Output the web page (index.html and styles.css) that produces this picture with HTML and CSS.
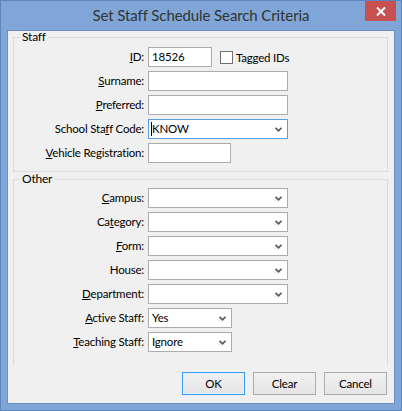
FILE: index.html
```html
<!DOCTYPE html>
<html>
<head>
<meta charset="utf-8">
<link rel="stylesheet" href="styles.css">
</head>
<body>
<div class="window">
  <div class="titlebar">
    <div class="tb-spacer"></div>
    <div class="title">Set Staff Schedule Search Criteria</div>
    <div class="tb-right">
      <div class="close-btn">
        <svg width="10" height="9" viewBox="0 0 10 9"><path d="M1 0.5 L9 8.5 M9 0.5 L1 8.5" stroke="#fff" stroke-width="2" fill="none"/></svg>
      </div>
    </div>
  </div>
  <div class="client">
    <fieldset class="group group-staff">
      <legend>Staff</legend>
      <div class="form-grid">
        <label class="lbl"><u>I</u>D:</label>
        <div class="field-row">
          <div class="textbox w-id">18526</div>
          <span class="checkbox"></span>
          <span class="check-label">Tagged IDs</span>
        </div>
        <label class="lbl"><u>S</u>urname:</label>
        <div class="textbox w-wide"></div>
        <label class="lbl"><u>P</u>referred:</label>
        <div class="textbox w-wide"></div>
        <label class="lbl">School Sta<u>f</u>f Code:</label>
        <div class="combo w-wide focused"><span class="combo-text"><span class="caret"></span>KNOW</span><svg class="chev" width="7" height="5" viewBox="0 0 7 5"><path d="M0.5 0.8 L3.5 3.8 L6.5 0.8" stroke="#5a5a5a" stroke-width="1.8" fill="none"/></svg></div>
        <label class="lbl"><u>V</u>ehicle Registration:</label>
        <div class="textbox w-veh"></div>
      </div>
    </fieldset>
    <fieldset class="group group-other">
      <legend>Other</legend>
      <div class="form-grid">
        <label class="lbl"><u>C</u>ampus:</label>
        <div class="combo w-wide"><span class="combo-text"></span><svg class="chev" width="7" height="5" viewBox="0 0 7 5"><path d="M0.5 0.8 L3.5 3.8 L6.5 0.8" stroke="#5a5a5a" stroke-width="1.8" fill="none"/></svg></div>
        <label class="lbl">Ca<u>t</u>egory:</label>
        <div class="combo w-wide"><span class="combo-text"></span><svg class="chev" width="7" height="5" viewBox="0 0 7 5"><path d="M0.5 0.8 L3.5 3.8 L6.5 0.8" stroke="#5a5a5a" stroke-width="1.8" fill="none"/></svg></div>
        <label class="lbl"><u>F</u>orm:</label>
        <div class="combo w-wide"><span class="combo-text"></span><svg class="chev" width="7" height="5" viewBox="0 0 7 5"><path d="M0.5 0.8 L3.5 3.8 L6.5 0.8" stroke="#5a5a5a" stroke-width="1.8" fill="none"/></svg></div>
        <label class="lbl">House:</label>
        <div class="combo w-wide"><span class="combo-text"></span><svg class="chev" width="7" height="5" viewBox="0 0 7 5"><path d="M0.5 0.8 L3.5 3.8 L6.5 0.8" stroke="#5a5a5a" stroke-width="1.8" fill="none"/></svg></div>
        <label class="lbl"><u>D</u>epartment:</label>
        <div class="combo w-wide"><span class="combo-text"></span><svg class="chev" width="7" height="5" viewBox="0 0 7 5"><path d="M0.5 0.8 L3.5 3.8 L6.5 0.8" stroke="#5a5a5a" stroke-width="1.8" fill="none"/></svg></div>
        <label class="lbl"><u>A</u>ctive Staff:</label>
        <div class="combo w-small"><span class="combo-text">Yes</span><svg class="chev" width="7" height="5" viewBox="0 0 7 5"><path d="M0.5 0.8 L3.5 3.8 L6.5 0.8" stroke="#5a5a5a" stroke-width="1.8" fill="none"/></svg></div>
        <label class="lbl"><u>T</u>eaching Staff:</label>
        <div class="combo w-small"><span class="combo-text">Ignore</span><svg class="chev" width="7" height="5" viewBox="0 0 7 5"><path d="M0.5 0.8 L3.5 3.8 L6.5 0.8" stroke="#5a5a5a" stroke-width="1.8" fill="none"/></svg></div>
      </div>
    </fieldset>
    <div class="buttons">
      <div class="btn default">OK</div>
      <div class="btn">Clear</div>
      <div class="btn">Cancel</div>
    </div>
  </div>
</div>
</body>
</html>
```
FILE: styles.css
```css
* { box-sizing: border-box; }
html, body { margin: 0; padding: 0; }
body {
  width: 402px;
  height: 411px;
  font-family: Lato, "Noto Sans", sans-serif;
  font-size: 11.5px;
  letter-spacing: -0.2px;
  color: #000;
  background: #7fa6d6;
}
.window {
  width: 402px;
  height: 411px;
  background: #7fa6d6;
  border: 1px solid #5f86bb;
  display: flex;
  flex-direction: column;
}
.titlebar {
  height: 29px;
  display: grid;
  grid-template-columns: 1fr auto 1fr;
  align-items: start;
}
.title {
  font-size: 15px;
  letter-spacing: -0.1px;
  line-height: 29px;
  color: #333;
  white-space: nowrap;
}
.tb-right {
  display: flex;
  justify-content: flex-end;
  padding-right: 5px;
}
.close-btn {
  width: 31px;
  height: 20px;
  background: #c75050;
  display: flex;
  align-items: center;
  justify-content: center;
}
.close-btn svg { display: block; }
.client {
  margin: 0 6px 6px 6px;
  flex: 1;
  background: #f0f0f0;
  border: 1px solid #6a8fc0;
  padding: 0 6px 5px 5px;
  display: flex;
  flex-direction: column;
}
.group {
  margin: 0;
  padding: 0;
  border: 1px solid #dcdcdc;
  min-width: 0;
}
.group legend {
  margin-left: 6px;
  padding: 0 2px;
  line-height: 12px;
  font-size: 12px;
}
.group-staff { padding: 4px 0 8px 0; }
.group-other {
  margin-top: 1px;
  padding: 3px 0 14px 0;
  border-bottom: none;
}
.form-grid {
  display: grid;
  grid-template-columns: 130px auto;
  column-gap: 4px;
  row-gap: 4px;
  align-items: center;
  justify-items: start;
}
.lbl {
  justify-self: end;
  white-space: nowrap;
  line-height: 16px;
}
.field-row {
  display: flex;
  align-items: center;
}
.textbox, .combo {
  height: 20px;
  background: #fff;
  border: 1px solid #ababab;
  padding: 0 3px;
  line-height: 18px;
  white-space: nowrap;
}
.combo {
  display: flex;
  align-items: center;
  justify-content: space-between;
  padding-right: 5px;
  border-color: #acacac;
}
.combo.focused { border-color: #569de5; }
.combo-text { display: flex; align-items: center; }
.caret {
  display: inline-block;
  width: 1px;
  height: 14px;
  background: #000;
  margin-left: -1px;
}
.chev { display: block; flex: none; }
.w-id { width: 64px; }
.w-wide { width: 140px; }
.w-veh { width: 83px; }
.w-small { width: 84px; }
.checkbox {
  width: 13px;
  height: 13px;
  border: 1px solid #707070;
  background: #fff;
  margin-left: 8px;
}
.check-label {
  margin-left: 3px;
}
.buttons {
  margin-top: 6px;
  display: flex;
  justify-content: flex-end;
  gap: 8px;
  padding-right: 1px;
}
.btn {
  width: 63px;
  height: 23px;
  border: 1px solid #acacac;
  background: linear-gradient(#f0f0f0, #e5e5e5);
  display: flex;
  align-items: center;
  justify-content: center;
}
.btn.default {
  border-color: #3399ff;
  box-shadow: inset 0 0 0 1px #e5f1fb;
}
```
